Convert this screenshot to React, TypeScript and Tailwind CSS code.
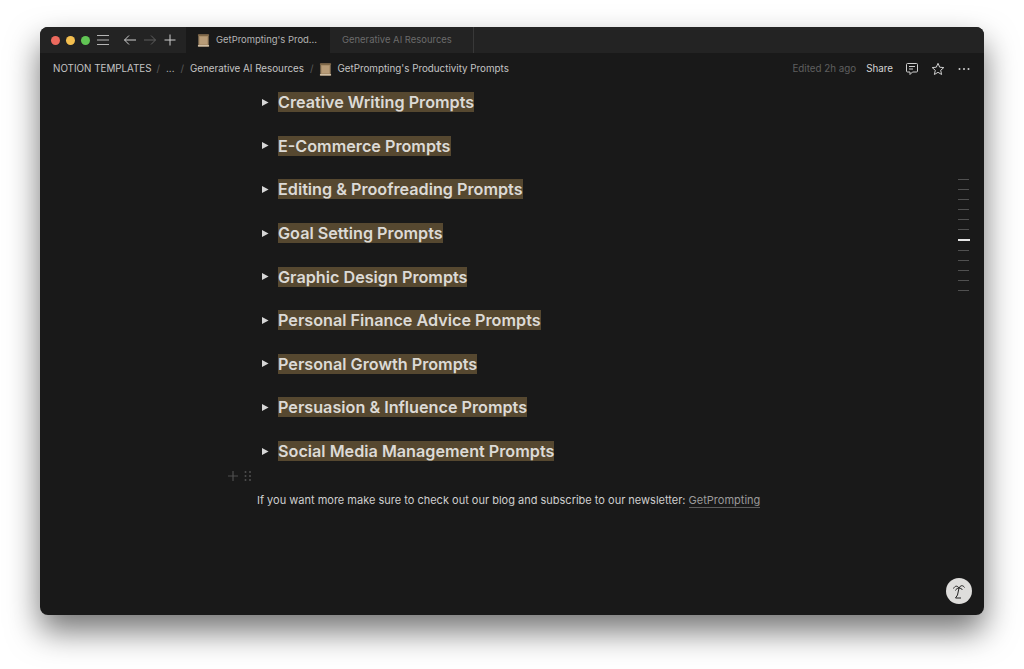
const HEADINGS = [
  'Creative Writing Prompts',
  'E-Commerce Prompts',
  'Editing & Proofreading Prompts',
  'Goal Setting Prompts',
  'Graphic Design Prompts',
  'Personal Finance Advice Prompts',
  'Personal Growth Prompts',
  'Persuasion & Influence Prompts',
  'Social Media Management Prompts',
]

function ScrollIcon({ size }: { size: number }) {
  return (
    <svg width={size} height={size} viewBox="0 0 14 14" className="shrink-0">
      <rect x="1.5" y="0.5" width="11" height="13" fill="#a58a68" />
      <rect x="1" y="0.5" width="12" height="1.6" fill="#7d6647" />
      <rect x="1" y="11.9" width="12" height="1.6" fill="#d2c2a8" />
      <rect x="3" y="3" width="8" height="8" fill="#b89c78" />
    </svg>
  )
}

function Heading({ text }: { text: string }) {
  return (
    <div className="flex h-[43.6px] items-center">
      <svg width="8" height="9" viewBox="0 0 8 9" className="ml-[4px] mr-[9px] shrink-0">
        <path d="M1 1 L7.6 4.5 L1 8 Z" fill="#d6d6d6" />
      </svg>
      <span className="bg-[#564830] text-[16.2px] leading-[20px] font-semibold text-[#dcdad6]">
        {text}
      </span>
    </div>
  )
}

export default function App() {
  const ticks = Array.from({ length: 12 }, (_, i) => i)

  return (
    <div className="h-[669px] w-[1024px] overflow-hidden bg-white pl-[40px] pt-[27px] font-['Inter',sans-serif]">
      <div className="relative flex h-[588px] w-[944px] flex-col overflow-hidden rounded-[8px] bg-[#191919] shadow-[0_16px_32px_rgba(0,0,0,0.55)]">
        {/* tab bar */}
        <div className="flex h-[26px] shrink-0 items-stretch bg-[#232323]">
          <div className="flex w-[146px] items-center pl-[11px]">
            <span className="h-[9px] w-[9px] rounded-full bg-[#ed6a5e]" />
            <span className="ml-[6px] h-[9px] w-[9px] rounded-full bg-[#f4bf4f]" />
            <span className="ml-[6px] h-[9px] w-[9px] rounded-full bg-[#61c554]" />
            <svg width="14" height="12" viewBox="0 0 14 12" className="ml-[6px]" stroke="#b5b5b5" strokeWidth="1">
              <path d="M1 1.5H13M1 6H13M1 10.5H13" />
            </svg>
            <svg width="14" height="12" viewBox="0 0 14 12" className="ml-[13px]" fill="none" stroke="#cfcfcf" strokeWidth="1">
              <path d="M13 6H1.5M6 1.5L1.5 6L6 10.5" />
            </svg>
            <svg width="14" height="12" viewBox="0 0 14 12" className="ml-[6px]" fill="none" stroke="#5e5e5e" strokeWidth="1">
              <path d="M1 6H12.5M8 1.5L12.5 6L8 10.5" />
            </svg>
            <svg width="12" height="12" viewBox="0 0 12 12" className="ml-[7px]" stroke="#cfcfcf" strokeWidth="1">
              <path d="M6 0.5V11.5M0.5 6H11.5" />
            </svg>
          </div>
          <div className="flex w-[144px] items-center bg-[#191919] pl-[11px]">
            <ScrollIcon size={13} />
            <span className="ml-[6px] text-[9.45px] text-[#b4b4b4]">GetPrompting's Prod...</span>
          </div>
          <div className="flex w-[144px] items-center border-r border-[#383838] pl-[12px]">
            <span className="text-[9.45px] text-[#6b6b6b]">Generative AI Resources</span>
          </div>
        </div>

        {/* breadcrumb bar */}
        <div className="flex h-[32px] shrink-0 items-center pl-[13px] pr-[13px] text-[9.8px] text-[#c4c4c4]">
          <span>NOTION TEMPLATES</span>
          <span className="ml-[5px] mr-[6px] text-[#5a5a5a]">/</span>
          <span>...</span>
          <span className="mx-[6px] text-[#5a5a5a]">/</span>
          <span>Generative AI Resources</span>
          <span className="mx-[6px] text-[#5a5a5a]">/</span>
          <ScrollIcon size={13} />
          <span className="ml-[5px]">GetPrompting's Productivity Prompts</span>
          <span className="ml-auto text-[#5f5f5f]">Edited 2h ago</span>
          <span className="ml-[10px] text-[#d4d4d4]">Share</span>
          <svg width="14" height="14" viewBox="0 0 14 14" className="ml-[12px]" fill="none" stroke="#cfcfcf" strokeWidth="1">
            <path d="M2.5 1.5H11.5A1 1 0 0 1 12.5 2.5V9A1 1 0 0 1 11.5 10H7.5L5 12.5V10H2.5A1 1 0 0 1 1.5 9V2.5A1 1 0 0 1 2.5 1.5Z" />
            <path d="M4 4.5H10M4 7H8" />
          </svg>
          <svg width="14" height="14" viewBox="0 0 14 14" className="ml-[12px]" fill="none" stroke="#cfcfcf" strokeWidth="1">
            <path d="M7 1.3L8.7 5.2L12.8 5.6L9.7 8.3L10.6 12.5L7 10.3L3.4 12.5L4.3 8.3L1.2 5.6L5.3 5.2Z" />
          </svg>
          <svg width="14" height="14" viewBox="0 0 14 14" className="ml-[12px]" fill="#cfcfcf">
            <circle cx="2.5" cy="7" r="1" />
            <circle cx="7" cy="7" r="1" />
            <circle cx="11.5" cy="7" r="1" />
          </svg>
        </div>

        {/* page body, scrolled a little so the first row sits close under the bar */}
        <div className="-mt-[4.5px] flex-1 pl-[217px]">
          {HEADINGS.map((h) => (
            <Heading key={h} text={h} />
          ))}
          <div className="relative mt-[11px] flex h-[25px] items-end text-[11px] text-[#cfcfcf]">
            <div className="absolute left-[-30px] top-[-14px] flex items-center gap-[5px]">
              <svg width="12" height="12" viewBox="0 0 12 12" stroke="#4f4f4f" strokeWidth="1.2">
                <path d="M6 1V11M1 6H11" />
              </svg>
              <svg width="8" height="12" viewBox="0 0 8 12" fill="#4f4f4f">
                <circle cx="1.5" cy="2" r="1" />
                <circle cx="6" cy="2" r="1" />
                <circle cx="1.5" cy="6" r="1" />
                <circle cx="6" cy="6" r="1" />
                <circle cx="1.5" cy="10" r="1" />
                <circle cx="6" cy="10" r="1" />
              </svg>
            </div>
            <span>
              If you want more make sure to check out our blog and subscribe to our newsletter:{' '}
              <span className="border-b border-[#5c5c5c] text-[#9b9b9b]">GetPrompting</span>
            </span>
          </div>
        </div>

        {/* outline ticks */}
        <div className="absolute left-[918px] top-[152px] flex flex-col gap-[9px]">
          {ticks.map((i) => (
            <span key={i} className={i === 6 ? 'h-[2px] w-[12px] bg-[#e4e4e4]' : 'h-[1px] w-[11px] bg-[#505050]'} />
          ))}
        </div>

        {/* help bubble */}
        <div className="absolute bottom-[11px] right-[12px] flex h-[26px] w-[26px] items-center justify-center rounded-full bg-[#dedddb]">
          <svg width="16" height="17" viewBox="0 0 16 17" fill="none" stroke="#222" strokeWidth="1">
            <path d="M8 5C6.5 2.5 4 2.5 2.5 5.5M8 5C9.5 2 12 2 13.5 4.5M8 5C6.5 5 5 6 4.5 7.5M8 5C9.5 5 11 6 11.5 7" />
            <path d="M8 5L6.5 12L4.5 15H10" />
          </svg>
        </div>
      </div>
    </div>
  )
}
